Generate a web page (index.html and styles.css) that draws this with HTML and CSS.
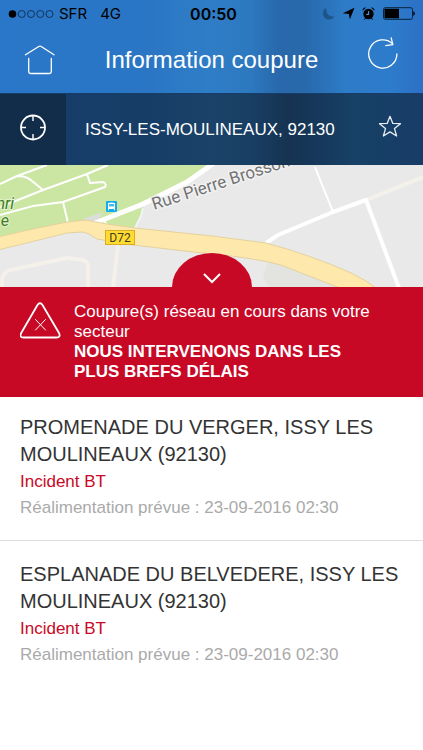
FILE: index.html
```html
<!DOCTYPE html>
<html lang="fr">
<head>
<meta charset="utf-8">
<meta name="viewport" content="width=device-width, initial-scale=1">
<title>Information coupure</title>
<link rel="stylesheet" href="styles.css">
</head>
<body>
<header class="header">
  <div class="status">
    <div class="status-left">
      <svg class="signal" width="46" height="10" viewBox="0 0 46 10" aria-hidden="true">
        <circle cx="4.5" cy="5" r="3.8" fill="#000"/>
        <g fill="none" stroke="#0b2440" stroke-width=".8"><circle cx="13.7" cy="5" r="3.5"/><circle cx="23" cy="5" r="3.5"/><circle cx="32.3" cy="5" r="3.5"/><circle cx="41.5" cy="5" r="3.5"/></g>
      </svg>
      <span>SFR</span>
      <span class="network">4G</span>
    </div>
    <time class="clock">00:50</time>
    <div class="status-right">
      <svg width="13" height="13" viewBox="0 0 13 13" aria-hidden="true"><path d="M4.300.8A6.200 6.200 0 1 0 12.600 9.200Q9.500 9.900 6.800 8.200 3.600 5.500 4.300.8Z" fill="#1d5588"/></svg>
      <svg width="13" height="13" viewBox="0 0 13 13" aria-hidden="true"><path d="M12.500.8 7.900 12.200 6.800 7 .8 6.200Z" fill="#000"/></svg>
      <svg width="13" height="13" viewBox="0 0 13 13" aria-hidden="true"><circle cx="6.500" cy="7" r="5.200"/><path d="M.5 3.800A3 3 0 0 1 4.200.6ZM12.500 3.800A3 3 0 0 0 8.800.6Z"/><path d="M2.500 12.700l1.300-2M10.500 12.700l-1.300-2" stroke="#000"/><path d="M6.600 4v3.400H4.200" fill="none" stroke="#4e91ce" stroke-width="1.100"/></svg>
      <svg class="battery" width="33" height="13" viewBox="0 0 33 13" aria-hidden="true"><rect x="1.500" y=".7" width="29" height="11.600" rx="1.800" fill="none" stroke="#07182b" stroke-width=".9"/><rect x="2.500" y="1.700" width="14.500" height="9.600" rx=".5"/><path d="M31.300 4.200q1.500.4 1.500 2.300t-1.500 2.300Z"/></svg>
    </div>
  </div>
  <div class="nav">
    <button class="icon-button" type="button" aria-label="Accueil">
      <svg width="32" height="32" viewBox="0 0 32 32" fill="none" stroke="#fff" stroke-width="1.300" stroke-linecap="round" stroke-linejoin="round"><path d="M1.500 10.800 14.800 2.500q1.200-.7 2.400 0L30 10.800M4.700 14.500v13.200q0 1.800 1.800 1.800h19q1.800 0 1.800-1.800V14.500"/></svg>
    </button>
    <h1 class="title">Information coupure</h1>
    <button class="icon-button refresh" type="button" aria-label="Actualiser">
      <svg width="32" height="34" viewBox="0 0 32 34" fill="none" stroke="#fff" stroke-width="1.300" stroke-linecap="round" stroke-linejoin="round"><path d="M29.900 17A14.100 14.100 0 1 1 25.800 7M24.200.8l1.600 6.900-7 1"/></svg>
    </button>
  </div>
</header>
<div class="location">
  <button class="locate" type="button" aria-label="Me localiser">
    <svg width="28" height="32" viewBox="0 0 28 32" fill="none" stroke="#fff" stroke-width="1.800"><circle cx="14" cy="13.500" r="12"/><path d="M14 2v5M14 20v5M2 13.500h5M21 13.500h5" stroke-width="1.400"/></svg>
  </button>
  <span class="place">ISSY-LES-MOULINEAUX, 92130</span>
  <button class="favorite" type="button" aria-label="Ajouter aux favoris">
    <svg width="24" height="24" viewBox="0 0 24 24" fill="none" stroke="#e6edf3" stroke-width="1.300" stroke-linejoin="round"><path d="m12 1.300 2.800 7.100 7.700.3-6 4.900 2.100 7.400-6.600-4.100L5.400 21l2.100-7.400-6-4.900 7.700-.3Z"/></svg>
  </button>
</div>
<main>
  <section class="map-panel" aria-label="Carte">
    <svg class="map" viewBox="0 0 423 122" preserveAspectRatio="xMidYMid slice">
      <rect width="423" height="122" fill="#e9e9e9"/>
      <path d="M268 97 263 112l6 10h72L284 100Z" fill="#e3e3df"/>
      <path d="M0 0H211L187 17 143 39 90 58 67 59 0 74ZM90 60 143 42 141 50 135 64 107 62Z" fill="#cbe6a3"/>
      <path d="m83 54 20-7-4 7-10 4Z" fill="#dcdedb"/>
      <g fill="none" stroke="#f4f1eb" stroke-width="4" stroke-linejoin="round">
        <path d="M2 122v-6q0-8 8-11L67 93l16 2q5 2 5 7v20M118 80l-5 42M366 35l57-23"/>
      </g>
      <g fill="none" stroke="#fff" stroke-width="2" stroke-linejoin="round">
        <path d="M0 19 17 11 47 0M17 11q10 0 15 5l11 9M0 42l18-7 25-10L87 9 108 0M87 9l3 9 13-1q4 2 2 5L63 37 33 41 0 50M63 37l5 21M103 54l5 8M315 2l18 45"/>
        <path d="m143 43-2 8-6 12" stroke="#f3f3f3"/>
      </g>
      <path d="M214-2 187 17 143 39 90 60" fill="none" stroke="#fff" stroke-width="5"/>
      <path d="m266 78 12-8 55-23 33-12 33 88" fill="none" stroke="#fff" stroke-width="4" stroke-linejoin="round"/>
      <path d="M-2 72 28 65 67 57 85 55 107 59 135 63 212 71 266 78Q311 90 351 108q15 7 25 15h-36L281 100q-25-7-70-11L133 80 97 74Q87 67 82 67L67 68-2 85Z" fill="#ffe8ab" stroke="#e3d29d"/>
      <g font-family="Roboto, sans-serif">
        <text transform="translate(154 45) rotate(-18)" font-size="17" fill="#737373" stroke="#f2f2f2" stroke-width="3" paint-order="stroke" stroke-linejoin="round">Rue Pierre Brosson</text>
        <g font-size="16" font-style="italic" fill="#3e7d20" stroke="#e2f0ce" stroke-width="2" paint-order="stroke"><text x="14" y="44" text-anchor="end">nri</text><text x="9" y="61" text-anchor="end">e</text></g>
        <rect x="105.500" y="65.500" width="29" height="14" fill="#ffdc2f" stroke="#d9ad25"/>
        <text x="120" y="77" font-size="12" text-anchor="middle" fill="#3e3d30">D72</text>
      </g>
      <rect x="106" y="36" width="11" height="11" rx="1" fill="#10aef0"/>
      <path d="M108 38q3.500-1 7 0v6h-7Z" fill="#fff"/>
      <path d="M109 39h5v2.500h-5Z" fill="#46bce9"/>
      <path d="M108.500 43.500v1.800M114.500 43.500v1.800" stroke="#fff"/>
    </svg>
    <button class="toggle" type="button" aria-label="Agrandir la carte">
      <svg width="20" height="12" viewBox="0 0 20 12" fill="none" stroke="#fff" stroke-width="2"><path d="m2 2 8 8 8-8"/></svg>
    </button>
  </section>
  <section class="alert">
    <svg class="alert-icon" width="41" height="38" viewBox="0 0 41 38" fill="none" stroke="#fff" stroke-linecap="round" stroke-linejoin="round" aria-hidden="true"><path d="M17.500 3q2.500-3.500 5 0L39 31q2 4.500-2.500 4.500h-33Q-1 35.500 1.200 31Z" stroke-width="1.800"/><path d="m15.500 17.500 10 10.500m0-10.500-10 10.500" stroke-width="1"/></svg>
    <p class="alert-text">Coupure(s) réseau en cours dans votre secteur <strong>NOUS INTERVENONS DANS LES PLUS BREFS DÉLAIS</strong></p>
  </section>
  <ul class="outages">
    <li class="outage">
      <h2>PROMENADE DU VERGER, ISSY LES MOULINEAUX (92130)</h2>
      <p class="incident">Incident BT</p>
      <p class="restore">Réalimentation prévue : 23-09-2016 02:30</p>
    </li>
    <li class="outage">
      <h2>ESPLANADE DU BELVEDERE, ISSY LES MOULINEAUX (92130)</h2>
      <p class="incident">Incident BT</p>
      <p class="restore">Réalimentation prévue : 23-09-2016 02:30</p>
    </li>
  </ul>
</main>
</body>
</html>
```
FILE: styles.css
```css
* {
  box-sizing: border-box;
}

body {
  margin: 0;
  background: #fff;
  color: #333;
  font-family: "Liberation Sans", Arial, sans-serif;
  font-size: 17px;
}

h1, h2, p, ul {
  margin: 0;
  padding: 0;
  font-weight: 400;
}

button {
  display: flex;
  align-items: center;
  justify-content: center;
  padding: 0;
  border: 0;
  background: none;
}

svg {
  display: block;
}

.header {
  background: linear-gradient(90deg, #2a76c8 0%, #2a76c5 35%, #2f7dc6 50%, #2d79c0 59%, #2868ab 66%, #2869ac 72%, #2e7cc8 82%, #2d7ccb 92%, #2c70c6 100%);
}

.status {
  display: grid;
  grid-template-columns: 1fr auto 1fr;
  align-items: center;
  height: 27px;
  padding: 0 8px;
  color: #000;
  font-family: Inter, sans-serif;
  font-size: 15px;
}

.status-left,
.status-right {
  display: flex;
  align-items: center;
  gap: 5px;
}

.status-right {
  justify-content: flex-end;
  gap: 7px;
}

.network {
  margin-left: 8px;
}

.clock {
  padding-left: 4px;
  font-weight: 600;
  font-size: 16px;
}

.nav {
  display: flex;
  align-items: center;
  justify-content: space-between;
  height: 66px;
  padding: 0 24px;
}

.title {
  color: #fff;
  font-size: 24px;
  line-height: 28px;
}

.refresh {
  padding-bottom: 12px;
}

.location {
  display: flex;
  align-items: center;
  height: 72px;
  border-top: 1px solid #173c68;
  background: linear-gradient(90deg, #173e69 0%, #163d66 35%, #1b4268 50%, #183e63 60%, #163351 68%, #16385a 75%, #174166 84%, #183c67 100%);
  color: #fff;
}

.locate {
  width: 66px;
  height: 100%;
  background: #112d4a;
}

.place {
  flex: 1;
  padding-left: 19px;
  white-space: nowrap;
}

.favorite {
  padding: 0 21px 6px 0;
}

.map-panel {
  position: relative;
  height: 122px;
  overflow: hidden;
}

.map {
  width: 100%;
  height: 100%;
}

.toggle {
  position: absolute;
  left: 50%;
  bottom: 0;
  width: 80px;
  height: 34px;
  padding-top: 16px;
  border-radius: 40px 40px 0 0 / 34px 34px 0 0;
  background: #c80926;
  transform: translateX(-50%);
}

.alert {
  display: flex;
  align-items: flex-start;
  gap: 13px;
  padding: 15px 20px;
  background: #c80926;
  color: #fff;
}

.alert-icon {
  flex: none;
}

.alert-text {
  max-width: 310px;
  line-height: 20px;
}

.alert-text strong {
  display: block;
}

.outages {
  list-style: none;
}

.outage {
  padding: 17px 20px 19px;
}

.outage + .outage {
  padding-top: 20px;
  border-top: 1px solid #ddd;
}

.outage h2 {
  font-size: 20px;
  line-height: 27px;
}

.incident {
  color: #c80926;
  line-height: 27px;
}

.restore {
  color: #aaa;
  line-height: 26px;
}
```
